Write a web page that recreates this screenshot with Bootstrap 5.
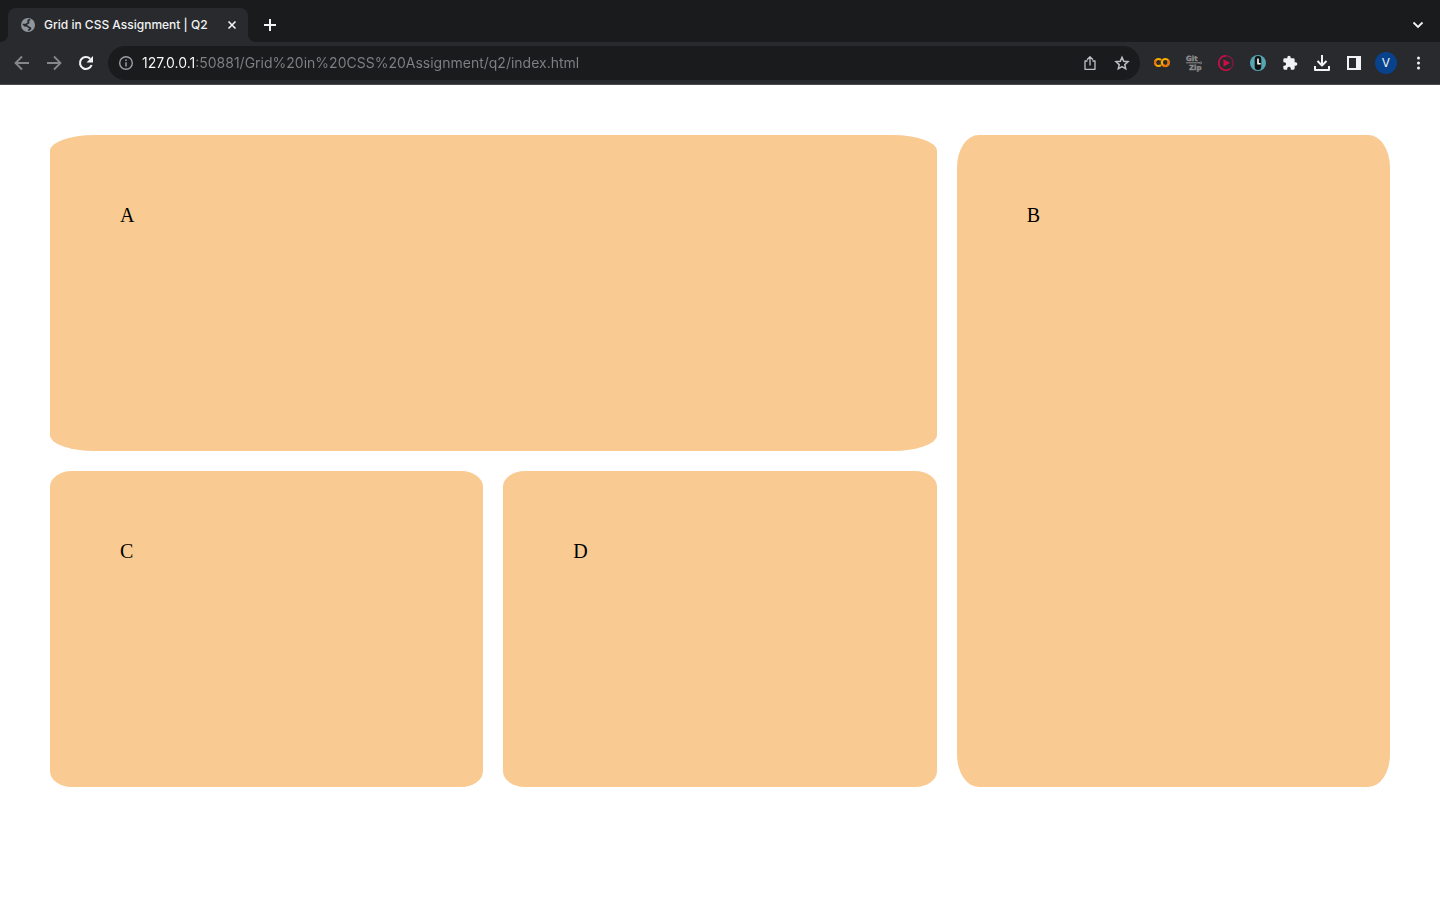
<!DOCTYPE html>
<html lang="en">
<head>
<meta charset="utf-8">
<meta name="viewport" content="width=device-width, initial-scale=1">
<title>Grid in CSS Assignment | Q2</title>
<link href="https://cdn.jsdelivr.net/npm/bootstrap@5.3.0/dist/css/bootstrap.min.css" rel="stylesheet">
<style>
  body { font-family: Inter, Roboto, sans-serif; background: #fff; }
  svg { display: block; }
  .tab-strip { height: 42px; background: #1a1b1d; padding: 8px 6px 0 8px; }
  .page-tab { position: relative; width: 240px; height: 34px; background: #292a2d; border-radius: 8px 8px 0 0; padding: 0 8px 0 12px; }
  .page-tab::before, .page-tab::after { content: ""; position: absolute; bottom: 0; width: 8px; height: 8px; }
  .page-tab::before { right: 100%; background: radial-gradient(circle at 0 0, transparent 8px, #292a2d 8px); }
  .page-tab::after { left: 100%; background: radial-gradient(circle at 100% 0, transparent 8px, #292a2d 8px); }
  .tab-title { font-size: 12px; line-height: 16px; font-weight: 500; color: #f1f3f4; }
  .new-tab { margin-left: 6px; }
  .tool-bar { height: 43px; background: #292a2d; border-bottom: 1px solid #4a4a4d; padding: 0 6px; }
  .icon-btn { display: flex; align-items: center; justify-content: center; flex: none; width: 32px; height: 32px; padding: 0; border: 0; background: none; color: #f1f3f4; }
  .icon-btn.slim { width: 16px; height: 16px; }
  .icon-btn.dim { color: #85878a; }
  .icon-btn.soft { color: #bdc1c6; }
  .address { height: 34px; border-radius: 17px; background: #1a1b1d; margin: 0 6px; padding: 0 2px 0 10px; }
  .address input {
    min-width: 0; border: 0; outline: 0; padding: 0; font-size: 14px; line-height: 20px; color: #7f8184;
    background: linear-gradient(to right, #fff 54px, #7f8184 54px);
    -webkit-background-clip: text; background-clip: text; -webkit-text-fill-color: transparent;
  }
  .avatar { width: 22px; height: 22px; border-radius: 50%; background: #08428c; font-size: 12px; line-height: 22px; }
  .boxes { grid-template-columns: repeat(3, 1fr); grid-template-rows: 1fr 1fr; gap: 20px; margin: 50px; height: calc((100vh - 85px) * .8); }
  .box { background: #f9ca92; border-radius: 5%; padding: 70px; font: 20px/20px "Liberation Serif", serif; color: #000; }
  .box-a { grid-column: span 2; }
  .box-b { grid-row: span 2; }
</style>
</head>
<body>
<header>
  <div class="tab-strip d-flex align-items-center">
    <div class="page-tab d-flex align-items-center">
      <svg width="16" height="16" viewBox="0 0 16 16"><circle cx="8" cy="8" r="7" fill="#8f979d"/><path d="M10.300 2.700C7.500 2.800 7.700 4.500 8.700 5.300 8.800 6.800 6.300 6.200 6.300 7.700H2.700M4 8.700c2 .2 3.400-.2 4.200 1 .9 1.200 2.300.7 2.300 1.900-.3 1-1.600.8-2.200 2" fill="none" stroke="#292a2d" stroke-width="1.700"/></svg>
      <span class="tab-title ms-2 me-auto text-nowrap">Grid in CSS Assignment | Q2</span>
      <button class="icon-btn slim" aria-label="Close tab"><svg width="16" height="16" viewBox="0 0 16 16"><path d="M4.500 4.500l7 7m0-7l-7 7" stroke="currentColor" stroke-width="1.600"/></svg></button>
    </div>
    <button class="icon-btn new-tab" aria-label="New tab"><svg width="12" height="12" viewBox="0 0 12 12"><path d="M0 6h12M6 0v12" stroke="currentColor" stroke-width="2"/></svg></button>
    <button class="icon-btn ms-auto" aria-label="Search tabs"><svg width="16" height="16" viewBox="0 0 16 16"><path d="M3.500 5.500l4.500 4.500 4.500-4.500" fill="none" stroke="currentColor" stroke-width="1.800"/></svg></button>
  </div>
  <div class="tool-bar d-flex align-items-center">
    <button class="icon-btn dim" aria-label="Back"><svg width="16" height="16" viewBox="0 0 16 16"><path d="M15 8H2M8 1.500L1.500 8 8 14.500" fill="none" stroke="currentColor" stroke-width="1.800"/></svg></button>
    <button class="icon-btn dim" aria-label="Forward"><svg width="16" height="16" viewBox="0 0 16 16"><path d="M1 8h13M8 1.500L14.500 8 8 14.500" fill="none" stroke="currentColor" stroke-width="1.800"/></svg></button>
    <button class="icon-btn" aria-label="Reload"><svg width="16" height="16" viewBox="0 0 16 16"><path d="M13.600 10A6 6 0 1 1 12.200 3.700" fill="none" stroke="currentColor" stroke-width="2.100"/><path d="M15 1v6.500H8.500z" fill="currentColor"/></svg></button>
    <div class="address d-flex align-items-center flex-fill">
      <svg class="flex-shrink-0 me-2" width="16" height="16" viewBox="0 0 16 16"><circle cx="8" cy="8" r="6.300" fill="none" stroke="#9aa0a6" stroke-width="1.400"/><path d="M8 7.200v4.200M8 4.500v1.600" stroke="#9aa0a6" stroke-width="1.500"/></svg>
      <input class="flex-fill" type="text" aria-label="Address" value="127.0.0.1:50881/Grid%20in%20CSS%20Assignment/q2/index.html">
      <button class="icon-btn soft" aria-label="Share"><svg width="16" height="16" viewBox="0 0 16 16"><path d="M5.500 6H3v8.300h10V6h-2.500M8 10.500V2M5 4.700l3-3 3 3" fill="none" stroke="currentColor" stroke-width="1.300" stroke-linejoin="round"/></svg></button>
      <button class="icon-btn soft" aria-label="Bookmark"><svg width="16" height="16" viewBox="0 0 16 16"><path d="M8 2.300l1.700 4 4.300.4-3.200 2.900.9 4.200L8 11.600l-3.700 2.200.9-4.200L2 6.700l4.300-.4z" fill="none" stroke="currentColor" stroke-width="1.500"/></svg></button>
    </div>
    <button class="icon-btn" aria-label="Colab"><svg width="16" height="16" viewBox="0 0 16 16"><g fill="none" stroke-width="2.200"><path d="M7 10A3.500 3.500 0 1 1 7 5" stroke="#f9ab00"/><path d="M2 5A3.500 3.500 0 0 0 2 10" stroke="#e8710a"/><circle cx="11.300" cy="7.500" r="3.500" stroke="#f9ab00"/><path d="M13.800 5A3.500 3.500 0 0 1 8.800 10" stroke="#e8710a"/></g></svg></button>
    <button class="icon-btn" aria-label="GitZip"><svg width="18" height="18" viewBox="0 0 18 18" fill="#8b8c8e" stroke="#8b8c8e" stroke-width=".4" font-family="DejaVu Sans" font-weight="700" font-size="7"><text x="1" y="7">Git</text><text x="4" y="16">Zip</text><path d="M1 8.800h14" stroke-width="1"/><circle cx="15.700" cy="8.800" r="1" fill="none" stroke-width=".8"/></svg></button>
    <button class="icon-btn" aria-label="Video speed"><svg width="16" height="16" viewBox="0 0 16 16"><circle cx="8" cy="8" r="7.200" fill="none" stroke="#8f1740" stroke-width="1.200"/><path d="M8 .8a7.200 7.200 0 0 0-5.100 12.300A7.200 7.200 0 0 0 12 14" fill="none" stroke="#d20b48" stroke-width="1.500"/><path d="M5.500 4.300v7.400L12 8z" fill="#d20b48"/></svg></button>
    <button class="icon-btn" aria-label="Time tracker"><svg width="16" height="16" viewBox="0 0 16 16"><circle cx="8" cy="8" r="8" fill="#55a5b5"/><rect x="4.700" y="1" width="6.600" height="14" rx="3.300" fill="#111"/><path d="M8 3.500v5.200h2.700" fill="none" stroke="#fff" stroke-width="1.600"/></svg></button>
    <button class="icon-btn" aria-label="Extensions"><svg width="16" height="16" viewBox="0 0 24 24"><path fill="currentColor" d="M20.500 11H19V7a2 2 0 0 0-2-2h-4V3.500a2.500 2.500 0 0 0-5 0V5H4a2 2 0 0 0-2 2v3.800h1.500a2.700 2.700 0 0 1 0 5.400H2V20a2 2 0 0 0 2 2h3.800v-1.500a2.700 2.700 0 0 1 5.400 0V22H17a2 2 0 0 0 2-2v-4h1.500a2.500 2.500 0 0 0 0-5z"/></svg></button>
    <button class="icon-btn" aria-label="Downloads"><svg width="16" height="16" viewBox="0 0 16 16"><path d="M8 0v10M3.500 6L8 10.500 12.500 6M1 11v4h14v-4" fill="none" stroke="currentColor" stroke-width="2" stroke-linejoin="round"/></svg></button>
    <button class="icon-btn" aria-label="Side panel"><svg width="16" height="16" viewBox="0 0 16 16"><path fill="currentColor" fill-rule="evenodd" d="M1 1h14v14H1zM3 3v10h7V3z"/></svg></button>
    <button class="icon-btn" aria-label="Profile"><span class="avatar">V</span></button>
    <button class="icon-btn" aria-label="Menu"><svg width="16" height="16" viewBox="0 0 16 16" fill="currentColor"><circle cx="8.500" cy="3" r="1.500"/><circle cx="8.500" cy="8" r="1.500"/><circle cx="8.500" cy="13" r="1.500"/></svg></button>
  </div>
</header>
<main class="boxes d-grid">
  <div class="box box-a">A</div>
  <div class="box box-b">B</div>
  <div class="box">C</div>
  <div class="box">D</div>
</main>
<script src="https://cdn.jsdelivr.net/npm/bootstrap@5.3.0/dist/js/bootstrap.bundle.min.js"></script>
</body>
</html>
